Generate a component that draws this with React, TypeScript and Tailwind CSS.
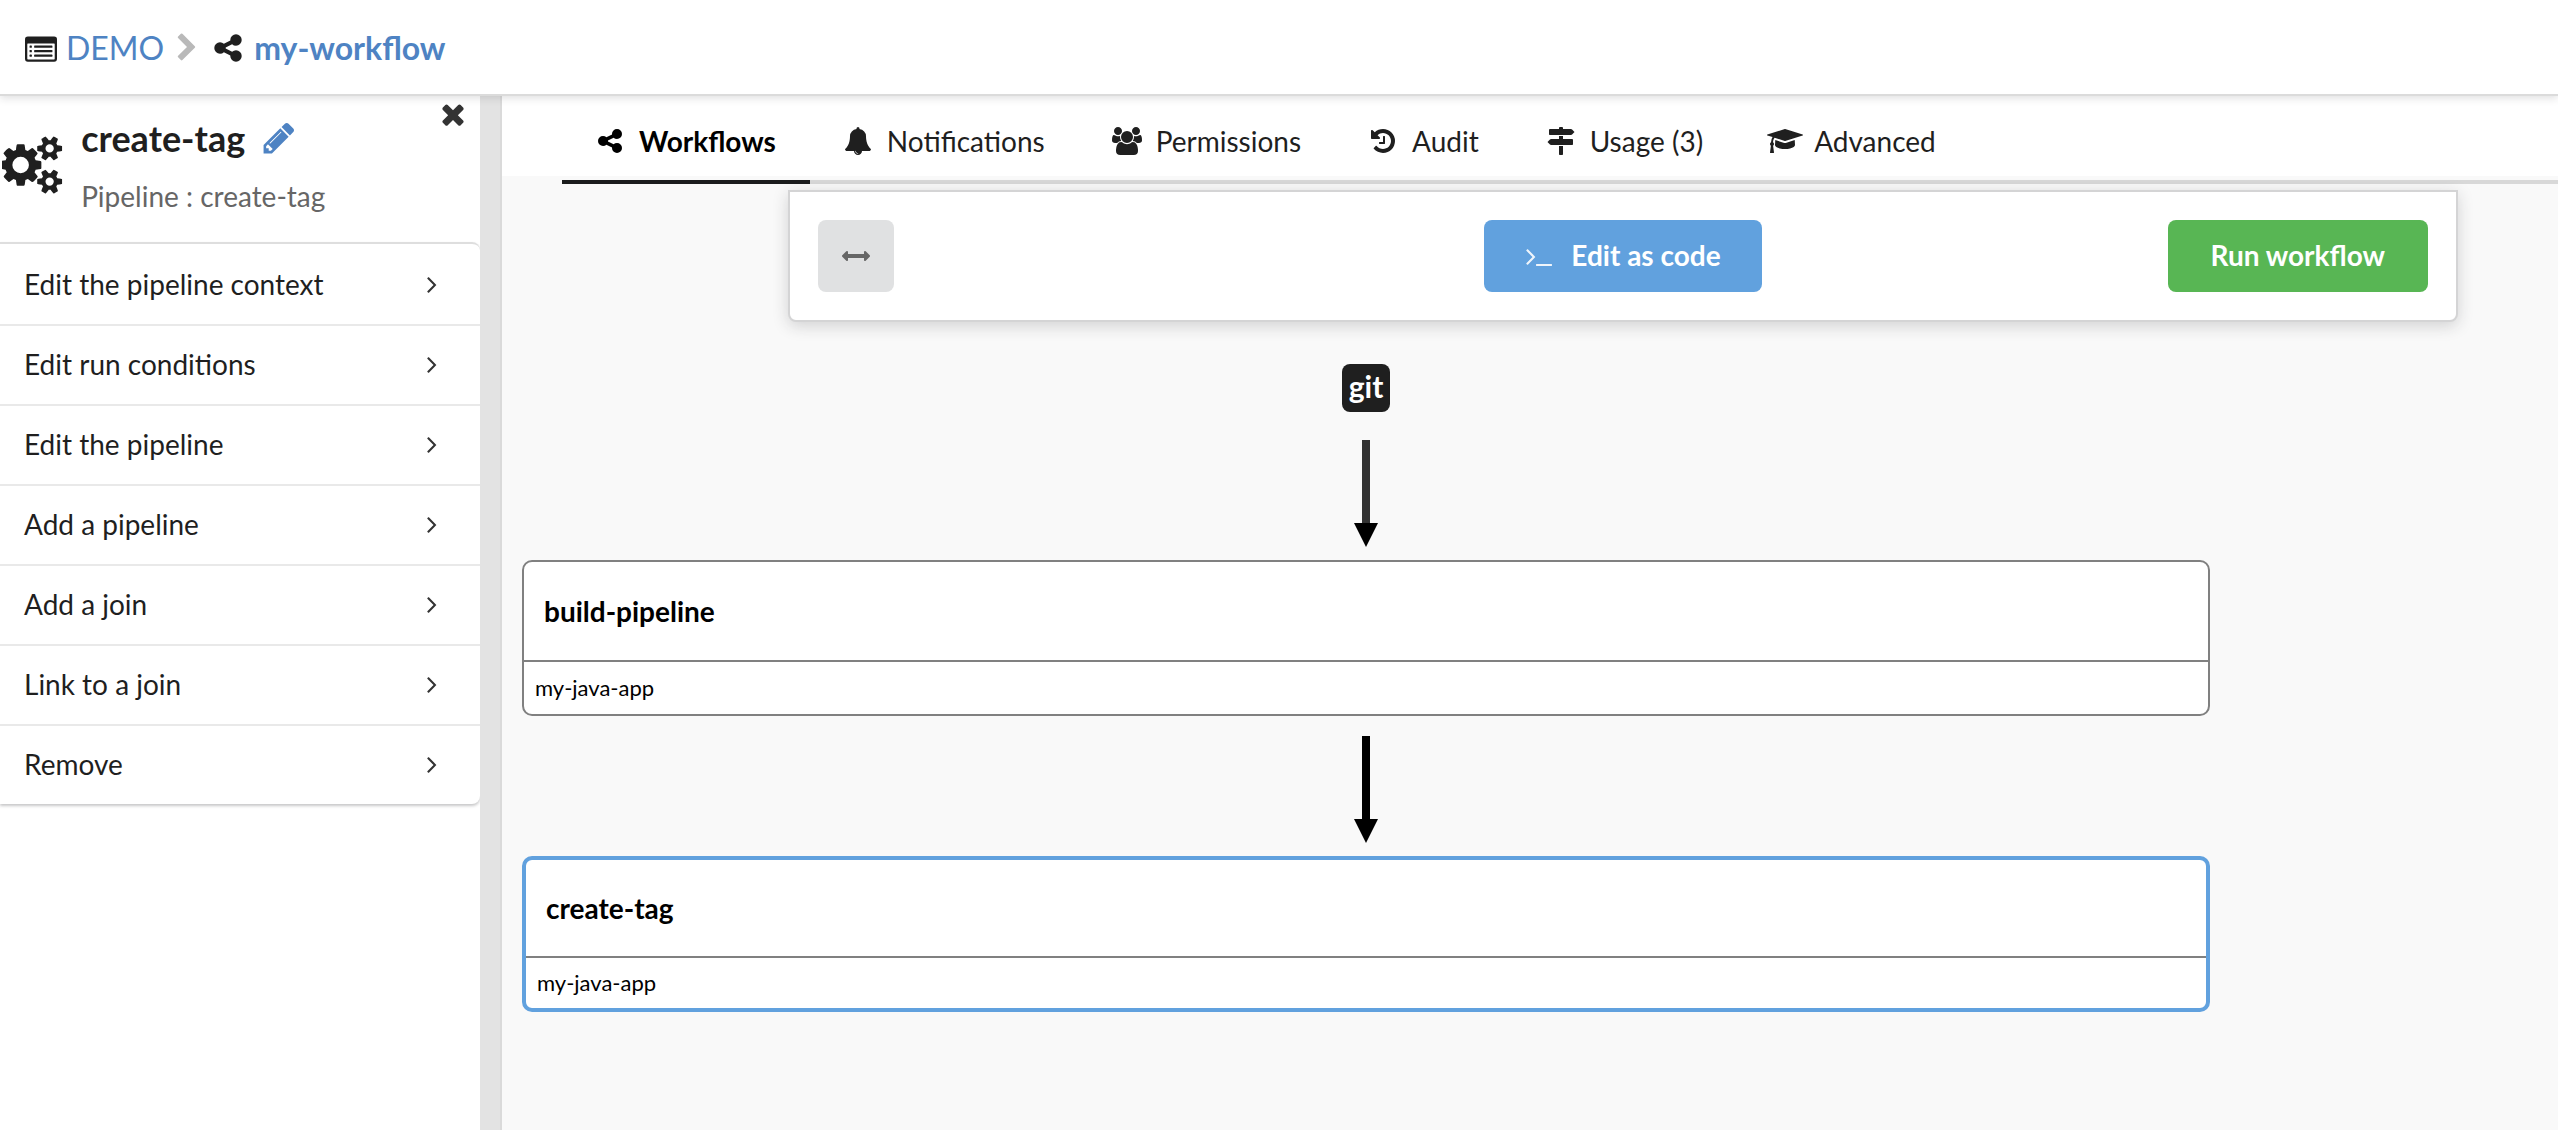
import type { ReactNode } from "react";

type GlyphProps = { d: string; className?: string; viewBox?: string };

function Glyph({ d, className = "h-7", viewBox = "0 0 1792 1792" }: GlyphProps) {
  return (
    <svg viewBox={viewBox} className={`shrink-0 ${className}`} fill="currentColor" aria-hidden="true">
      <path d={d} />
    </svg>
  );
}

const SHARE =
  "M1344 1024q133 0 226.5 93.5t93.5 226.5-93.5 226.5-226.5 93.5-226.5-93.5-93.5-226.5q0-12 2-34l-360-180q-92 86-218 86-133 0-226.5-93.5t-93.5-226.5 93.5-226.5 226.5-93.5q126 0 218 86l360-180q-2-22-2-34 0-133 93.5-226.5t226.5-93.5 226.5 93.5 93.5 226.5-93.5 226.5-226.5 93.5q-126 0-218-86l-360 180q2 22 2 34t-2 34l360 180q92-86 218-86z";
const COGS =
  "M832 896q0-106-75-181t-181-75-181 75-75 181 75 181 181 75 181-75 75-181zm768 512q0-52-38-90t-90-38-90 38-38 90q0 53 37.5 90.5t90.5 37.5 90.5-37.5 37.5-90.5zm0-1024q0-52-38-90t-90-38-90 38-38 90q0 53 37.5 90.5t90.5 37.5 90.5-37.5 37.5-90.5zm-384 421v185q0 10-7 19.5t-16 10.5l-155 24q-11 35-32 76 34 48 90 115 7 11 7 20 0 12-7 19-23 30-82.5 89.5t-78.5 59.5q-11 0-21-7l-115-90q-37 19-77 31-11 108-23 155-7 24-30 24h-186q-11 0-20-7.5t-10-17.5l-23-153q-34-10-75-31l-118 89q-7 7-20 7-11 0-21-8-144-133-144-160 0-9 7-19 10-14 41-53t47-61q-23-44-35-82l-152-24q-10-1-17-9.5t-7-19.5v-185q0-10 7-19.5t16-10.5l155-24q11-35 32-76-34-48-90-115-7-11-7-20 0-12 7-20 22-30 82-89t79-59q11 0 21 7l115 90q34-18 77-32 11-108 23-154 7-24 30-24h186q11 0 20 7.5t10 17.5l23 153q34 10 75 31l118-89q8-7 20-7 11 0 21 8 144 133 144 160 0 8-7 19-12 16-42 54t-45 60q23 48 34 82l152 23q10 2 17 10.5t7 19.5zm640 533v140q0 16-149 31-12 27-30 52 51 113 51 138 0 4-4 7-122 71-124 71-8 0-46-47t-52-68q-20 2-30 2t-30-2q-14 21-52 68t-46 47q-2 0-124-71-4-3-4-7 0-25 51-138-18-25-30-52-149-15-149-31v-140q0-16 149-31 13-29 30-52-51-113-51-138 0-4 4-7 4-2 35-20t59-34 30-16q8 0 46 46.5t52 67.5q20-2 30-2t30 2q51-71 92-112l6-2q4 0 124 70 4 3 4 7 0 25-51 138 17 23 30 52 149 15 149 31zm0-1024v140q0 16-149 31-12 27-30 52 51 113 51 138 0 4-4 7-122 71-124 71-8 0-46-47t-52-68q-20 2-30 2t-30-2q-14 21-52 68t-46 47q-2 0-124-71-4-3-4-7 0-25 51-138-18-25-30-52-149-15-149-31v-140q0-16 149-31 13-29 30-52-51-113-51-138 0-4 4-7 4-2 35-20t59-34 30-16q8 0 46 46.5t52 67.5q20-2 30-2t30 2q51-71 92-112l6-2q4 0 124 70 4 3 4 7 0 25-51 138 17 23 30 52 149 15 149 31z";
const PENCIL =
  "M491 1536l91-91-235-235-91 91v107h128v128h107zm523-928q0-22-22-22-10 0-17 7l-542 542q-7 7-7 17 0 22 22 22 10 0 17-7l542-542q7-7 7-17zm-54-192l416 416-832 832h-416v-416zm683 96q0 53-37 90l-166 166-416-416 166-165q36-38 90-38 53 0 91 38l235 234q37 39 37 91z";
const TIMES =
  "M1490 1322q0 40-28 68l-136 136q-28 28-68 28t-68-28l-294-294-294 294q-28 28-68 28t-68-28l-136-136q-28-28-28-68t28-68l294-294-294-294q-28-28-28-68t28-68l136-136q28-28 68-28t68 28l294 294 294-294q28-28 68-28t68 28l136 136q28 28 28 68t-28 68l-294 294 294 294q28 28 28 68z";
const BELL =
  "M912 1696q0-16-16-16-59 0-101.5-42.5t-42.5-101.5q0-16-16-16t-16 16q0 73 51.5 124.5t124.5 51.5q16 0 16-16zm816-288q0 52-38 90t-90 38h-448q0 106-75 181t-181 75-181-75-75-181h-448q-52 0-90-38t-38-90q50-42 91-88t85-119.5 74.5-158.5 50-206 19.5-260q0-152 117-282.5t307-158.5q-8-19-8-39 0-40 28-68t68-28 68 28 28 68q0 20-8 39 190 28 307 158.5t117 282.5q0 139 19.5 260t50 206 74.5 158.5 85 119.5 91 88z";
const ANGLE =
  "M1171 960q0 13-10 23l-466 466q-10 10-23 10t-23-10l-50-50q-10-10-10-23t10-23l393-393-393-393q-10-10-10-23t10-23l50-50q10-10 23-10t23 10l466 466q10 10 10 23z";
const CHEVRON =
  "M1363 877l-742 742q-19 19-45 19t-45-19l-166-166q-19-19-19-45t19-45l531-531-531-531q-19-19-19-45t19-45l166-166q19-19 45-19t45 19l742 742q19 19 19 45t-19 45z";
const HISTORY =
  "M1664 896q0 156-61 298t-164 245-245 164-298 61q-172 0-327-72.5t-264-204.5q-7-10-6.5-22.5t8.5-20.5l137-138q10-9 25-9 16 2 23 12 73 95 179 147t225 52q104 0 198.5-40.5t163.5-109.5 109.5-163.5 40.5-198.5-40.5-198.5-109.5-163.5-163.5-109.5-198.5-40.5q-98 0-188 35.5t-160 101.5l137 138q31 30 14 69-17 40-59 40h-448q-26 0-45-19t-19-45v-448q0-42 40-59 39-17 69 14l130 129q107-101 244.5-156.5t284.5-55.5q156 0 298 61t245 164 164 245 61 298zm-640-288v448q0 14-9 23t-23 9h-320q-14 0-23-9t-9-23v-64q0-14 9-23t23-9h224v-352q0-14 9-23t23-9h64q14 0 23 9t9 23z";
const SIGNS =
  "M1745 297q10 10 10 23t-10 23l-141 141q-28 28-68 28h-1344q-26 0-45-19t-19-45v-256q0-26 19-45t45-19h576v-64q0-26 19-45t45-19h128q26 0 45 19t19 45v64h512q40 0 68 28zm-977 919h256v512q0 26-19 45t-45 19h-128q-26 0-45-19t-19-45v-512zm832-448q26 0 45 19t19 45v256q0 26-19 45t-45 19h-1344q-40 0-68-28l-141-141q-10-10-10-23t10-23l141-141q28-28 68-28h512v-192h256v192h576z";
const CAP =
  "M1774 836l18 316q4 69-82 128t-235 93.5-323 34.5-323-34.5-235-93.5-82-128l18-316 574 181q22 7 48 7t48-7zm530-324q0 23-22 31l-1120 352q-4 1-10 1t-10-1l-652-206q-43 34-71 111.5t-34 178.5q63 36 63 109 0 69-58 107l58 433q2 14-8 25-9 11-24 11h-192q-15 0-24-11-10-11-8-25l58-433q-58-38-58-107 0-73 65-111 11-207 98-330l-333-104q-22-8-22-31t22-31l1120-352q4-1 10-1t10 1l1120 352q22 8 22 31z";
const ARROWS_H =
  "M1792 896q0 26-19 45l-256 256q-19 19-45 19t-45-19-19-45v-128h-1024v128q0 26-19 45t-45 19-45-19l-256-256q-19-19-19-45t19-45l256-256q19-19 45-19t45 19 19 45v128h1024v-128q0-26 19-45t45-19 45 19l256 256q19 19 19 45z";
const TERMINAL =
  "M649 983l-466 466q-10 10-23 10t-23-10l-50-50q-10-10-10-23t10-23l393-393-393-393q-10-10-10-23t10-23l50-50q10-10 23-10t23 10l466 466q10 10 10 23t-10 23zm1079 457v64q0 14-9 23t-23 9h-960q-14 0-23-9t-9-23v-64q0-14 9-23t23-9h960q14 0 23 9t9 23z";
const USERS =
  "M593 896q-162 5-265 128h-134q-82 0-138-40.5t-56-118.5q0-353 124-353 6 0 43.5 21t97.5 42.5 119 21.5q67 0 133-23-5 37-5 66 0 139 81 256zm1071 637q0 120-73 189.5t-194 69.5h-874q-121 0-194-69.5t-73-189.5q0-53 3.5-103.5t14-109 26.5-108.5 43-97.5 62-81 85.5-53.5 111.5-20q10 0 43 21.5t73 48 107 48 135 21.5 135-21.5 107-48 73-48 43-21.5q61 0 111.5 20t85.5 53.5 62 81 43 97.5 26.5 108.5 14 109 3.5 103.5zm-1024-1277q0 106-75 181t-181 75-181-75-75-181 75-181 181-75 181 75 75 181zm704 384q0 159-112.5 271.5t-271.5 112.5-271.5-112.5-112.5-271.5 112.5-271.5 271.5-112.5 271.5 112.5 112.5 271.5zm576 225q0 78-56 118.5t-138 40.5h-134q-103-123-265-128 81-117 81-256 0-29-5-66 66 23 133 23 59 0 119-21.5t97.5-42.5 43.5-21q124 0 124 353zm-128-609q0 106-75 181t-181 75-181-75-75-181 75-181 181-75 181 75 75 181z";

function ListAlt() {
  return (
    <svg viewBox="0 0 1792 1792" className="size-8 shrink-0" aria-hidden="true">
      <rect x="0" y="256" width="1792" height="1408" rx="160" fill="#1f1f1f" />
      <rect x="128" y="640" width="1536" height="896" rx="32" fill="#fff" />
      {[768, 1024, 1280].map((y) => (
        <g key={y} fill="#1f1f1f">
          <rect x="256" y={y - 16} width="128" height="128" rx="32" />
          <rect x="512" y={y - 16} width="1024" height="128" rx="32" />
        </g>
      ))}
    </svg>
  );
}

const tabs = [
  { label: "Workflows", d: SHARE, active: true },
  { label: "Notifications", d: BELL },
  { label: "Permissions", d: USERS, viewBox: "0 0 1920 1792" },
  { label: "Audit", d: HISTORY },
  { label: "Usage (3)", d: SIGNS },
  { label: "Advanced", d: CAP, viewBox: "0 0 2304 1792" },
];

const actions = [
  "Edit the pipeline context",
  "Edit run conditions",
  "Edit the pipeline",
  "Add a pipeline",
  "Add a join",
  "Link to a join",
  "Remove",
];

function Arrow({ shaft }: { shaft: string }) {
  return (
    <svg viewBox="0 0 24 108" className="h-27 w-6" aria-hidden="true">
      <rect x="8" width="8" height="84" fill={shaft} />
      <path d="M0 83h24L12 107z" fill="#000" />
    </svg>
  );
}

function PipelineNode({ name, app, selected }: { name: string; app: string; selected?: boolean }) {
  return (
    <button
      type="button"
      className={`flex h-39 w-full flex-col rounded-[10px] bg-white text-left text-black ${
        selected ? "border-4 border-[#61a1de]" : "border-2 border-[#808080]"
      }`}
    >
      <span className="flex w-full grow items-center border-b-2 border-[#808080] px-5 text-[28px] leading-9 font-bold">
        {name}
      </span>
      <span className={`flex w-full items-center px-[11px] text-[22px] leading-7 ${selected ? "h-[50px]" : "h-[52px]"}`}>
        {app}
      </span>
    </button>
  );
}

function ToolButton({ className, children, label }: { className: string; children: ReactNode; label?: string }) {
  return (
    <button
      type="button"
      aria-label={label}
      className={`flex h-18 items-center justify-center rounded-lg text-[28px] leading-9 font-bold ${className}`}
    >
      {children}
    </button>
  );
}

export default function App() {
  return (
    <div className="flex min-h-screen flex-col bg-[#f9f9f9] font-[Lato,sans-serif] text-[#1f1f1f]">
      <header className="relative z-10 flex h-24 items-center border-b-2 border-[#dbdbdb] bg-white pt-0.5 pl-[25px] text-[32px] leading-10 shadow-[0_2px_8px_rgba(34,36,38,0.15)]">
        <ListAlt />
        <a href="#demo" className="ml-[9px] text-[#4e83c3]">
          DEMO
        </a>
        <Glyph d={CHEVRON} className="ml-2 size-[30px] text-[#b9b9b9]" />
        <Glyph d={SHARE} className="ml-2.5 size-8" />
        <a href="#my-workflow" className="ml-2.5 font-bold text-[#4e83c3]">
          my-workflow
        </a>
      </header>

      <div className="flex grow">
        <aside className="w-[480px] shrink-0 bg-white">
          <div className="flex h-[146px]">
            <Glyph d={COGS} viewBox="0 0 1920 1792" className="mt-10 ml-0.5 h-[58px]" />
            <div className="ml-[17px] grow pt-[18px]">
              <div className="flex items-center gap-4">
                <h1 className="text-[36px] leading-12 font-bold">create-tag</h1>
                <button type="button" aria-label="Rename pipeline" className="text-[#4e83c3]">
                  <Glyph d={PENCIL} className="size-9" />
                </button>
              </div>
              <p className="mt-4 text-[28px] leading-9 text-[#666]">Pipeline : create-tag</p>
            </div>
            <button type="button" aria-label="Close" className="mt-0.5 mr-[11px] h-8 text-[#333]">
              <Glyph d={TIMES} className="size-8" />
            </button>
          </div>
          <nav className="rounded-r-lg border-t-2 border-[#dedede] shadow-[0_2px_3px_rgba(34,36,38,0.25)]">
            <ul>
              {actions.map((a) => (
                <li key={a} className="border-b-2 border-[#e9e9e9] first:pt-0.5 last:border-b-0">
                  <button
                    type="button"
                    className="flex h-[78px] w-full items-center justify-between pr-[34px] pb-[3px] pl-6 text-[28px] leading-9"
                  >
                    {a}
                    <Glyph d={ANGLE} className="size-7 text-[#333]" />
                  </button>
                </li>
              ))}
            </ul>
          </nav>
        </aside>
        <div className="w-[22px] shrink-0 border-r-2 border-[#dadada] bg-[#e3e3e3]" />

        <main className="min-w-0 grow">
          <div className="h-20 bg-white pl-15">
            <nav role="tablist" className="flex h-22 border-b-4 border-[#d8d8d8]">
              {tabs.map((t) => (
                <button
                  key={t.label}
                  type="button"
                  role="tab"
                  aria-selected={!!t.active}
                  className={`-mb-1 flex items-center gap-[13px] pt-1.5 pr-[34px] pl-8 text-[28px] leading-9 ${
                    t.active ? "border-b-4 border-[#1b1c1d] font-bold text-black" : "pb-1"
                  }`}
                >
                  <span className="flex w-8 justify-center">
                    <Glyph d={t.d} viewBox={t.viewBox} />
                  </span>
                  {t.label}
                </button>
              ))}
            </nav>
          </div>

          <div className="mt-[14px] mr-[100px] ml-[286px] grid grid-cols-[1fr_auto_1fr] rounded-b-lg border-2 border-[#d4d4d5] bg-white p-7 shadow-[0_4px_16px_rgba(34,36,38,0.18)]">
            <ToolButton label="Change direction" className="w-19 bg-[#e0e1e2] text-[#666]">
              <Glyph d={ARROWS_H} className="size-7" />
            </ToolButton>
            <ToolButton className="bg-[#61a1de] px-[41px] pb-0.5 text-white">
              <Glyph d={TERMINAL} className="mt-0.5 mr-[18px] size-7 opacity-90" />
              Edit as code
            </ToolButton>
            <ToolButton className="justify-self-end bg-[#58b654] px-[43px] pb-0.5 text-white">Run workflow</ToolButton>
          </div>

          <section className="mt-[42px] mr-[348px] ml-5 flex flex-col items-center">
            <div className="flex size-12 items-center justify-center rounded-lg bg-[#1f1f1f] pb-1 text-[30px] leading-9 font-bold text-white">
              git
            </div>
            <div className="mt-7 mb-3">
              <Arrow shaft="#333" />
            </div>
            <PipelineNode name="build-pipeline" app="my-java-app" />
            <div className="mt-5 mb-3">
              <Arrow shaft="#000" />
            </div>
            <PipelineNode name="create-tag" app="my-java-app" selected />
          </section>
        </main>
      </div>
    </div>
  );
}
